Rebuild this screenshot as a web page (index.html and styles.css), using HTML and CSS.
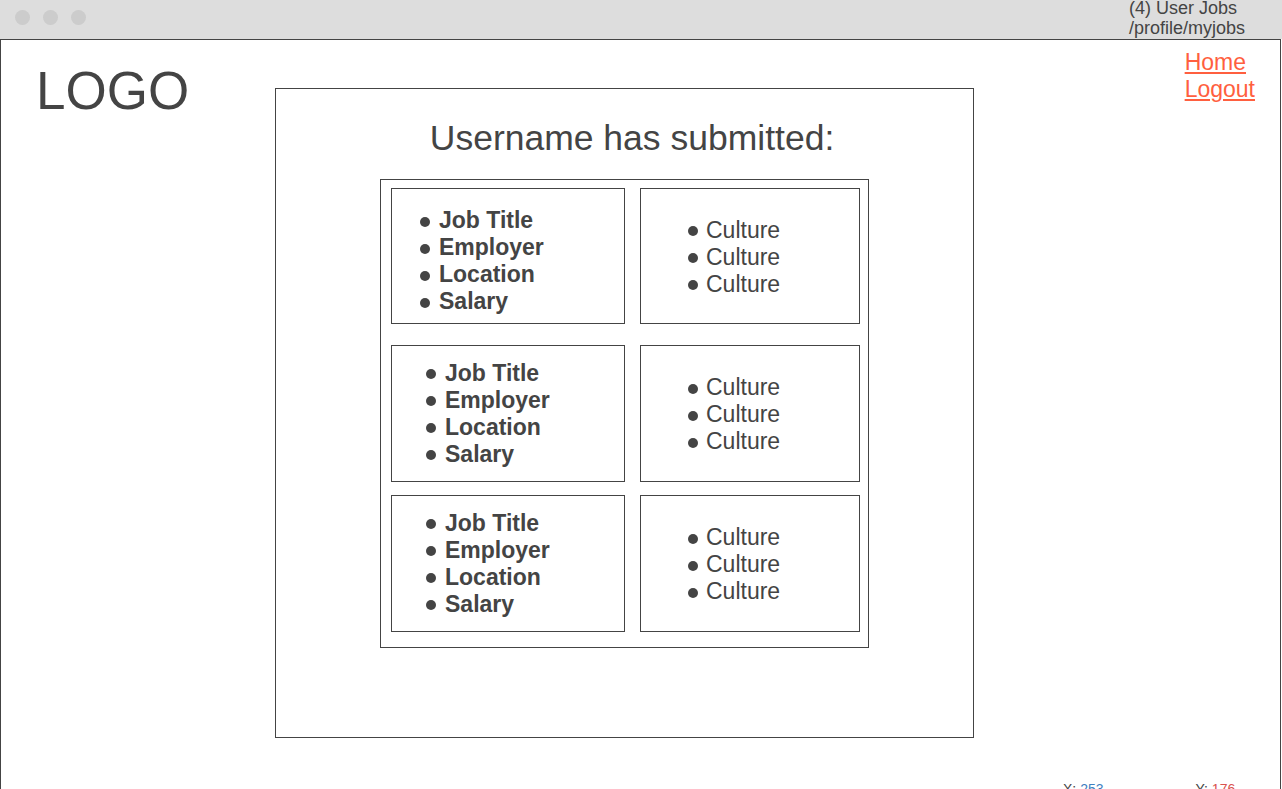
FILE: index.html
```html
<!DOCTYPE html>
<html lang="en">
<head>
<meta charset="utf-8">
<title>User Jobs</title>
<link rel="stylesheet" href="styles.css">
</head>
<body>
<div class="titlebar">
  <div class="dots"><span class="dot"></span><span class="dot"></span><span class="dot"></span></div>
  <div class="tab-title">(4) User Jobs<br>/profile/myjobs</div>
</div>
<div class="frame">
  <div class="logo">LOGO</div>
  <main class="panel">
    <h1 class="heading">Username has submitted:</h1>
    <div class="list-box">
      <div class="row row-1">
        <div class="card card-job card-first">
          <ul class="items bold">
            <li>Job Title</li>
            <li>Employer</li>
            <li>Location</li>
            <li>Salary</li>
          </ul>
        </div>
        <div class="card card-culture">
          <ul class="items">
            <li>Culture</li>
            <li>Culture</li>
            <li>Culture</li>
          </ul>
        </div>
      </div>
      <div class="row row-2">
        <div class="card card-job">
          <ul class="items bold">
            <li>Job Title</li>
            <li>Employer</li>
            <li>Location</li>
            <li>Salary</li>
          </ul>
        </div>
        <div class="card card-culture">
          <ul class="items">
            <li>Culture</li>
            <li>Culture</li>
            <li>Culture</li>
          </ul>
        </div>
      </div>
      <div class="row row-3">
        <div class="card card-job">
          <ul class="items bold">
            <li>Job Title</li>
            <li>Employer</li>
            <li>Location</li>
            <li>Salary</li>
          </ul>
        </div>
        <div class="card card-culture">
          <ul class="items">
            <li>Culture</li>
            <li>Culture</li>
            <li>Culture</li>
          </ul>
        </div>
      </div>
    </div>
  </main>
  <nav class="nav">
    <a href="#">Home</a>
    <a href="#">Logout</a>
  </nav>
</div>
<div class="coords"><span class="coord"><span class="c-label">X:</span> <span class="c-x">253</span></span><span class="coord"><span class="c-label">Y:</span> <span class="c-y">176</span></span></div>
</body>
</html>
```
FILE: styles.css
```css
html, body {
  margin: 0;
  padding: 0;
}
body {
  font-family: "Liberation Sans", Arial, sans-serif;
  color: #444;
  width: 1282px;
  height: 789px;
  overflow: hidden;
  position: relative;
  background: #fff;
}

.titlebar {
  height: 39px;
  background: #dddddd;
  display: flex;
  align-items: flex-start;
}
.dots {
  display: flex;
  gap: 13px;
  padding: 10px 0 0 15px;
}
.dot {
  width: 15px;
  height: 15px;
  border-radius: 50%;
  background: #cccccc;
}
.tab-title {
  margin-left: auto;
  width: 153px;
  margin-top: -2px;
  font-size: 18px;
  line-height: 20px;
  color: #444;
}

.frame {
  width: 1281px;
  height: 800px;
  box-sizing: border-box;
  border: 1px solid #444;
  border-bottom: none;
  display: grid;
  grid-template-columns: 274px 699px 1fr;
  align-items: start;
}
.logo {
  font-size: 53px;
  line-height: 53px;
  margin: 24px 0 0 35px;
}
.panel {
  margin-top: 48px;
  height: 650px;
  box-sizing: border-box;
  border: 1px solid #444;
}
.heading {
  font-size: 35.5px;
  font-weight: normal;
  line-height: 40px;
  text-align: center;
  margin: 29px 0 0;
  padding-left: 15px;
}
.list-box {
  width: 489px;
  height: 469px;
  box-sizing: border-box;
  margin: 21px auto 0;
  border: 1px solid #444;
  padding: 8px 8px 15px 10px;
}
.row {
  display: grid;
  grid-template-columns: 234px 220px;
  column-gap: 15px;
}
.row-1 { height: 136px; }
.row-2 { height: 137px; margin-top: 21px; }
.row-3 { height: 137px; margin-top: 13px; }

.card {
  border: 1px solid #444;
  box-sizing: border-box;
  display: flex;
  align-items: center;
}
.card-job { padding-left: 34px; }
.card-first { padding-left: 28px; padding-top: 10px; }
.card-culture { padding-left: 47px; padding-top: 2px; }

.items {
  list-style: none;
  margin: 0;
  padding: 0;
  font-size: 23px;
  line-height: 27px;
}
.items.bold { font-weight: bold; }
.items li {
  display: flex;
  align-items: center;
}
.items li::before {
  content: "";
  width: 10px;
  height: 10px;
  border-radius: 50%;
  background: #444;
  margin-right: 9px;
  margin-top: 2px;
  flex: none;
}
.card-culture .items li::before { margin-right: 8px; }

.nav {
  justify-self: end;
  margin: 9px 25px 0 0;
  display: flex;
  flex-direction: column;
  font-size: 23px;
  line-height: 27px;
}
.nav a {
  color: #ff5f3f;
  text-decoration: underline;
}

.coords {
  position: absolute;
  left: 1063px;
  top: 782px;
  font-size: 14px;
  line-height: 14px;
  display: flex;
  gap: 92px;
  color: #444;
}
.c-x { color: #3f7fbf; }
.c-y { color: #d9534f; }
```
